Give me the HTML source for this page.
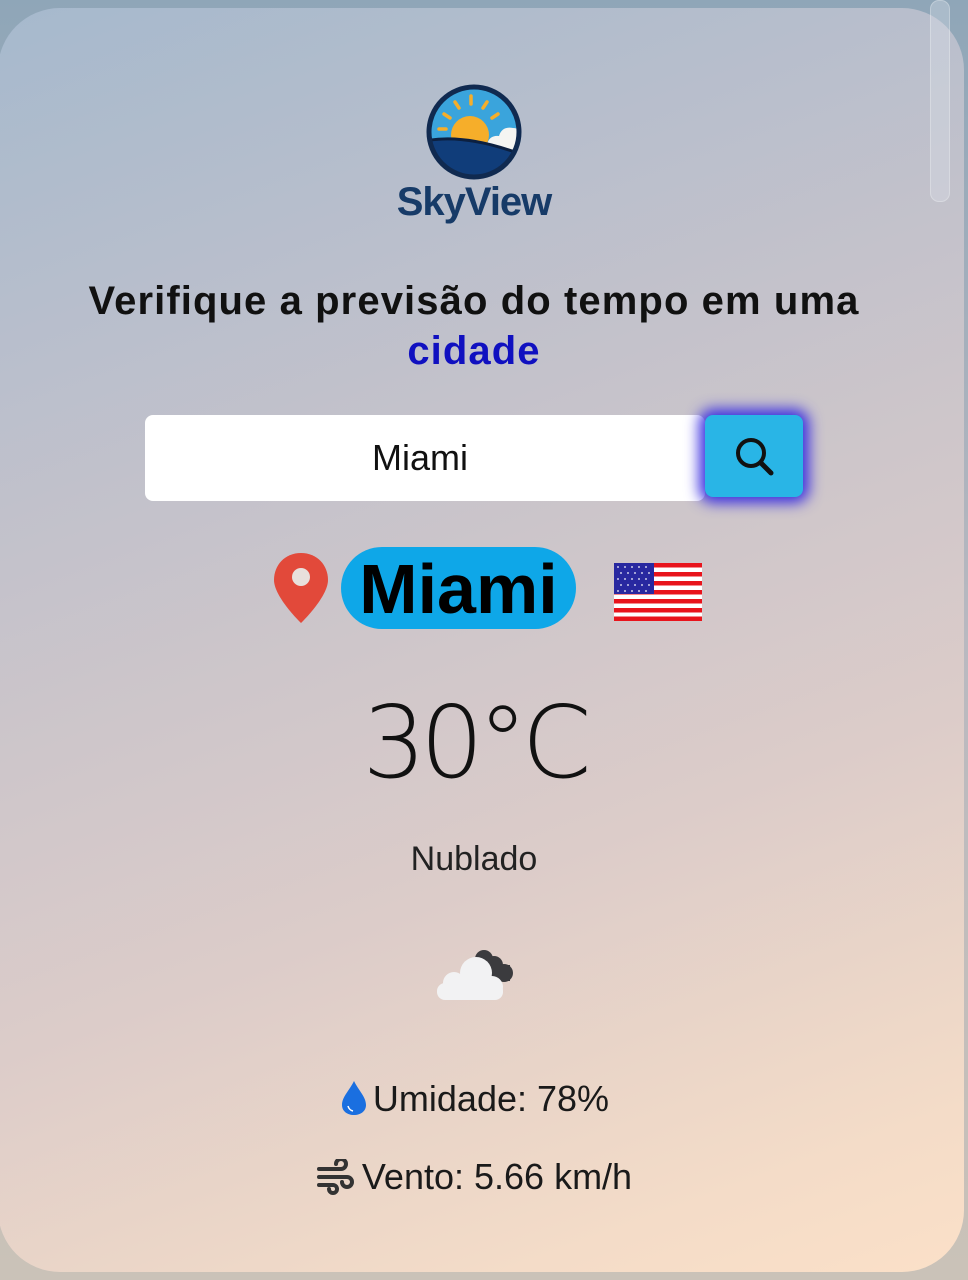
<!DOCTYPE html>
<html><head><meta charset="utf-8"><style>
html,body{margin:0;padding:0;width:968px;height:1280px;overflow:hidden;}
body{background:linear-gradient(180deg,#8fa6b8 0%,#b9b9c0 50%,#cac2b8 100%);font-family:"Liberation Sans","DejaVu Sans",sans-serif;position:relative;}
.card{position:absolute;left:-2px;top:8px;width:966px;height:1264px;border-radius:62px;background:linear-gradient(160deg,#a6b9cd 0%,#c4c2cb 35%,#dcccc9 65%,#f4dcc8 90%,#fbe0c8 100%);}
.sb{position:absolute;left:930px;top:0;width:18px;height:200px;border-radius:9px;background:rgba(220,225,235,0.35);border:1px solid rgba(255,255,255,0.25);}
.abs{position:absolute;}
.title{left:0;width:948px;top:276px;text-align:center;font-weight:bold;font-size:40px;letter-spacing:1.1px;line-height:50px;color:#111;}
.title span{color:#1010c0;}
.input{left:145px;top:415px;width:560px;height:86px;background:#fff;border-radius:8px;}
.input div{position:absolute;left:0;width:550px;top:22px;text-align:center;font-size:36px;color:#111;}
.btn{left:705px;top:415px;width:98px;height:82px;background:#29b5e6;border-radius:8px;box-shadow:0 0 14px 6px #3a2ee0;}
.pill{left:341px;top:547px;width:235px;height:82px;border-radius:41px;background:#0ea7e8;text-align:center;font-weight:bold;font-size:70px;line-height:84px;color:#000;}
.temp{left:0;width:948px;top:684px;text-align:center;font-size:100px;letter-spacing:-6px;color:#111;font-family:"DejaVu Sans","Liberation Sans",sans-serif;font-weight:200;}
.desc{left:0;width:948px;top:840px;text-align:center;font-size:34px;color:#222;}
.row{left:0;width:948px;text-align:center;font-size:36px;color:#1a1a1a;}
</style></head><body>
<div class="card"></div>
<div class="sb"></div>
<svg class="abs" style="left:425px;top:83px" width="98" height="98" viewBox="0 0 98 98">
<defs><clipPath id="c"><circle cx="49" cy="49" r="45"/></clipPath></defs>
<circle cx="49" cy="49" r="46" fill="#102a50"/>
<g clip-path="url(#c)">
<rect x="0" y="0" width="98" height="98" fill="#3aa4dc"/>
<circle cx="45" cy="52" r="19" fill="#f6ae2a"/>
<path d="M62 62 q2-10 12-9 q3-10 14-8 q8 0 10 10 v20 h-36z" fill="#f5f5f2"/>
<path d="M0 58 q40-8 98 14 v30 h-98z" fill="#103d7a"/>
<path d="M0 58 q40-8 98 14" stroke="#0c2040" stroke-width="3" fill="none"/>
</g>
<g stroke="#f6ae2a" stroke-width="3.5" stroke-linecap="round">
<line x1="46" y1="13" x2="46" y2="21"/><line x1="30" y1="19" x2="34" y2="25"/><line x1="62" y1="19" x2="58" y2="25"/><line x1="19" y1="31" x2="25" y2="35"/><line x1="73" y1="31" x2="67" y2="35"/><line x1="14" y1="46" x2="21" y2="46"/></g>
<circle cx="49" cy="49" r="45" fill="none" stroke="#102a50" stroke-width="5"/>
</svg>
<div class="abs" style="left:0;width:948px;top:180px;text-align:center;font-weight:bold;font-size:40px;color:#173b68;letter-spacing:-1px">SkyView</div>
<div class="abs title">Verifique a previsão do tempo em uma<br><span>cidade</span></div>
<div class="abs input"><div>Miami</div></div>
<div class="abs btn"><svg width="98" height="82" viewBox="0 0 98 82"><circle cx="46" cy="38" r="13" fill="none" stroke="#111" stroke-width="4"/><line x1="56" y1="48" x2="66" y2="58" stroke="#111" stroke-width="5" stroke-linecap="round"/></svg></div>
<svg class="abs" style="left:272px;top:551px" width="58" height="74" viewBox="0 0 58 74"><path d="M29 2 C13 2 2 14 2 29 C2 46 29 72 29 72 C29 72 56 46 56 29 C56 14 45 2 29 2z" fill="#e2493a"/><circle cx="29" cy="26" r="9" fill="#e8e0dc"/></svg>
<div class="abs pill">Miami</div>
<svg class="abs" style="left:614px;top:563px" width="88" height="58" viewBox="0 0 88 58">
<rect width="88" height="58" fill="#fff"/>
<g fill="#e8141c"><rect y="0" width="88" height="4.5"/><rect y="9" width="88" height="4.5"/><rect y="18" width="88" height="4.5"/><rect y="27" width="88" height="4.5"/><rect y="36" width="88" height="4.5"/><rect y="45" width="88" height="4.5"/><rect y="53.5" width="88" height="4.5"/></g>
<rect width="40" height="31" fill="#2828a0"/>
<g fill="#fff" opacity="0.75"><circle cx="4" cy="4" r="1"/><circle cx="11" cy="4" r="1"/><circle cx="18" cy="4" r="1"/><circle cx="25" cy="4" r="1"/><circle cx="32" cy="4" r="1"/><circle cx="7" cy="10" r="1"/><circle cx="14" cy="10" r="1"/><circle cx="21" cy="10" r="1"/><circle cx="28" cy="10" r="1"/><circle cx="35" cy="10" r="1"/><circle cx="4" cy="16" r="1"/><circle cx="11" cy="16" r="1"/><circle cx="18" cy="16" r="1"/><circle cx="25" cy="16" r="1"/><circle cx="32" cy="16" r="1"/><circle cx="7" cy="22" r="1"/><circle cx="14" cy="22" r="1"/><circle cx="21" cy="22" r="1"/><circle cx="28" cy="22" r="1"/><circle cx="35" cy="22" r="1"/><circle cx="4" cy="28" r="1"/><circle cx="11" cy="28" r="1"/><circle cx="18" cy="28" r="1"/><circle cx="25" cy="28" r="1"/><circle cx="32" cy="28" r="1"/></g>
</svg>
<div class="abs temp">30°C</div>
<div class="abs desc">Nublado</div>
<svg class="abs" style="left:432px;top:945px" width="90" height="60" viewBox="0 0 90 60">
<g fill="#3b3b3e"><circle cx="52" cy="14" r="9"/><circle cx="62" cy="20" r="9"/><circle cx="72" cy="28" r="9"/><rect x="48" y="20" width="30" height="16"/></g>
<g fill="#f2f2f3"><circle cx="44" cy="28" r="16"/><circle cx="22" cy="38" r="11"/><circle cx="60" cy="42" r="11"/><rect x="5" y="38" width="66" height="17" rx="8"/></g>
</svg>
<div class="abs row" style="top:1078px"><svg width="30" height="38" viewBox="0 0 30 38" style="vertical-align:-6px;margin-right:4px"><path d="M15 2 C10 12 3 18 3 26 C3 32 8 36 15 36 C22 36 27 32 27 26 C27 18 20 12 15 2z" fill="#1a6fe0"/><path d="M9 27 q1 4 5 5" stroke="#fff" stroke-width="1.5" fill="none"/></svg>Umidade: 78%</div>
<div class="abs row" style="top:1156px"><svg width="38" height="36" viewBox="0 0 38 36" style="vertical-align:-6px;margin-right:8px" fill="none" stroke="#333" stroke-width="4" stroke-linecap="round"><path d="M3 10 h22 a5 5 0 1 0 -5 -5"/><path d="M3 18 h28 a5 5 0 1 1 -5 5"/><path d="M3 26 h14 a4 4 0 1 1 -4 4"/></svg>Vento: 5.66 km/h</div>
</body></html>
